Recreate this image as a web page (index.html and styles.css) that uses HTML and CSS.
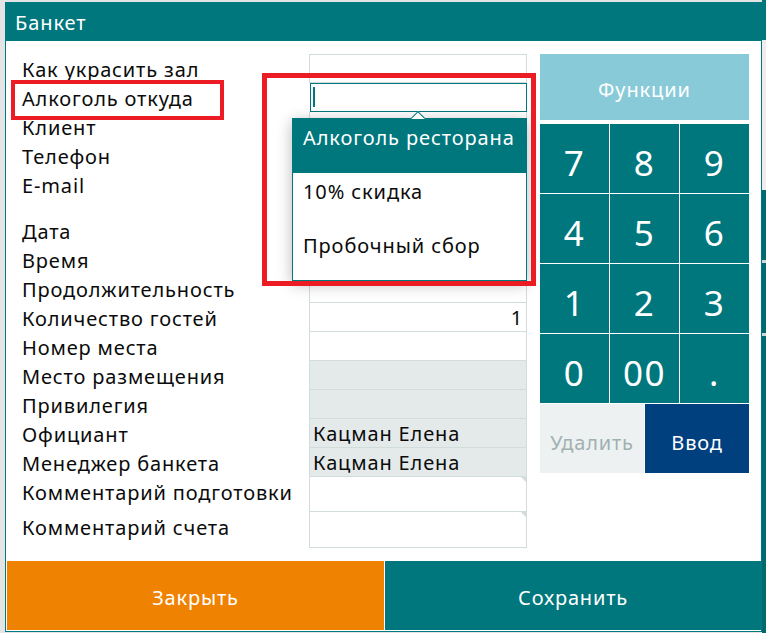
FILE: index.html
```html
<!DOCTYPE html>
<html lang="ru">
<head>
<meta charset="utf-8">
<title>Банкет</title>
<link rel="stylesheet" href="styles.css">
</head>
<body>
<div class="dialog">
  <div class="title">Банкет</div>
  <div class="content">
    <div class="form">
      <div class="label">Как украсить зал</div><div class="field"></div>
      <div class="label">Алкоголь откуда</div><div class="field focused"><span class="caret"></span></div>
      <div class="label">Клиент</div><div class="field"></div>
      <div class="label">Телефон</div><div class="field"></div>
      <div class="label">E-mail</div><div class="field"></div>
      <div class="spacer"></div>
      <div class="label">Дата</div><div class="field"></div>
      <div class="label">Время</div><div class="field"></div>
      <div class="label">Продолжительность</div><div class="field"></div>
      <div class="label">Количество гостей</div><div class="field num">1</div>
      <div class="label">Номер места</div><div class="field"></div>
      <div class="label">Место размещения</div><div class="field ro"></div>
      <div class="label">Привилегия</div><div class="field ro"></div>
      <div class="label">Официант</div><div class="field ro">Кацман Елена</div>
      <div class="label">Менеджер банкета</div><div class="field ro">Кацман Елена</div>
      <div class="label">Комментарий подготовки</div><div class="field memo"></div>
      <div class="label">Комментарий счета</div><div class="field memo"></div>
    </div>
    <div class="pad">
      <button class="key fn">Функции</button>
      <button class="key">7</button><button class="key">8</button><button class="key">9</button>
      <button class="key">4</button><button class="key">5</button><button class="key">6</button>
      <button class="key">1</button><button class="key">2</button><button class="key">3</button>
      <button class="key">0</button><button class="key">00</button><button class="key">.</button>
      <div class="pad-actions">
        <button class="key del">Удалить</button>
        <button class="key enter">Ввод</button>
      </div>
    </div>
    <ul class="dropdown">
      <li class="selected">Алкоголь ресторана</li>
      <li>10% скидка</li>
      <li>Пробочный сбор</li>
    </ul>
    <div class="mark mark-label"></div>
    <div class="mark mark-list"></div>
  </div>
  <div class="actions">
    <button class="btn close">Закрыть</button>
    <button class="btn save">Сохранить</button>
  </div>
</div>
<div class="desk-strip"></div>
</body>
</html>
```
FILE: styles.css
```css
* { box-sizing: border-box; }
html, body { margin: 0; padding: 0; }
body {
  width: 766px;
  height: 633px;
  overflow: hidden;
  background: #e4e4e4;
  display: flex;
  align-items: flex-start;
  font-family: "Noto Sans", "DejaVu Sans", sans-serif;
  color: #0b0b0b;
}
.dialog {
  margin: 2px 0 0 5px;
  width: 757px;
  height: 630px;
  border: 1px solid #007a80;
  background: #fff;
  display: flex;
  flex-direction: column;
}
.title {
  height: 38px;
  background: #00777d;
  color: #fff;
  font-size: 20px;
  letter-spacing: 0.9px;
  line-height: 37px;
  padding: 1px 0 0 9px;
}
.content {
  position: relative;
  height: 520px;
  padding: 13px 12px 0 16px;
  display: flex;
  gap: 13px;
}
.form {
  display: grid;
  grid-template-columns: 287px 218px;
  grid-template-rows: repeat(5, 29px) 17px repeat(9, 29px) 35px 36px;
  align-content: start;
}
.spacer { grid-column: 1 / span 2; }
.label {
  font-size: 20px;
  letter-spacing: 0.85px;
  line-height: 27px;
  padding-top: 2px;
  white-space: nowrap;
}
.field {
  border: 1px solid #d3dcdc;
  border-top: none;
  font-size: 20px;
  letter-spacing: 0.85px;
  line-height: 26px;
  padding: 2px 3px 0;
  white-space: nowrap;
  position: relative;
}
.form > .field:nth-child(2),
.form > .spacer + .label + .field { border-top: 1px solid #d3dcdc; }
.field.focused {
  border: 1px solid #00777d;
  margin-left: 1px;
}
.caret {
  position: absolute;
  left: 2px;
  top: 3px;
  width: 2px;
  height: 20px;
  background: #00777d;
}
.field.num { text-align: right; padding-right: 3px; }
.field.ro { background: #e4eaea; }
.field.memo::after {
  content: "";
  position: absolute;
  right: 0;
  top: 0;
  border-top: 5px solid #d3dcdc;
  border-left: 5px solid transparent;
}
.pad {
  width: 209px;
  display: grid;
  grid-template-columns: repeat(3, 69px);
  grid-auto-rows: 69px;
  gap: 1px;
  align-content: start;
}
.key {
  border: none;
  margin: 0;
  padding: 8px 0 0;
  background: #00777d;
  color: #fff;
  font-family: inherit;
  font-size: 35px;
  letter-spacing: 1.5px;
}
.key.fn {
  grid-column: 1 / span 3;
  background: #89cad9;
  font-size: 20px;
  letter-spacing: 0.9px;
  padding-top: 4px;
  margin-bottom: 3px;
}
.pad-actions {
  grid-column: 1 / span 3;
  display: grid;
  grid-template-columns: 104px 104px;
  gap: 1px;
}
.key.del {
  background: #edf1f1;
  color: #a1b1b1;
  font-size: 20px;
  letter-spacing: 0.8px;
  padding-top: 7px;
}
.key.enter {
  background: #00407f;
  font-size: 20px;
  letter-spacing: 0.8px;
  padding-top: 7px;
}
.dropdown {
  position: absolute;
  left: 286px;
  top: 77px;
  width: 235px;
  height: 163px;
  margin: 0;
  padding: 0;
  list-style: none;
  background: #fff;
  border: 1px solid #00777d;
  box-shadow: 0 3px 14px rgba(0, 0, 0, 0.28);
}
.dropdown::before {
  content: "";
  position: absolute;
  left: 120px;
  top: -6px;
  width: 9px;
  height: 9px;
  background: #fff;
  border-left: 1px solid #00777d;
  border-top: 1px solid #00777d;
  transform: rotate(45deg);
}
.dropdown li {
  position: relative;
  height: 54px;
  padding: 5px 10px 0;
  font-size: 20px;
  letter-spacing: 0.9px;
  line-height: 28px;
  white-space: nowrap;
}
.dropdown li.selected {
  background: #00777d;
  color: #fff;
}
.mark {
  position: absolute;
  border: 4px solid #ec1c24;
}
.mark-label {
  left: 5px;
  top: 39px;
  width: 213px;
  height: 40px;
}
.mark-list {
  left: 256px;
  top: 32px;
  width: 274px;
  height: 213px;
  border-width: 5px;
}
.actions {
  padding: 0 0 1px 1px;
  display: grid;
  grid-template-columns: 377px 376px;
  gap: 1px;
  height: 70px;
}
.btn {
  border: none;
  margin: 0;
  padding: 4px 0 0;
  color: #fff;
  font-family: inherit;
  font-size: 20px;
  letter-spacing: 0.8px;
}
.btn.close { background: #ef8200; }
.btn.save { background: #00777d; }
.desk-strip {
  width: 4px;
  height: 633px;
  background:
    linear-gradient(to bottom, #00777d 0 40px, #ededed 40px 190px, #006a70 190px 260px, #cfd8d8 260px 263px, #006a70 263px 333px, #cfd8d8 333px 336px, #006a70 336px);
}
```
